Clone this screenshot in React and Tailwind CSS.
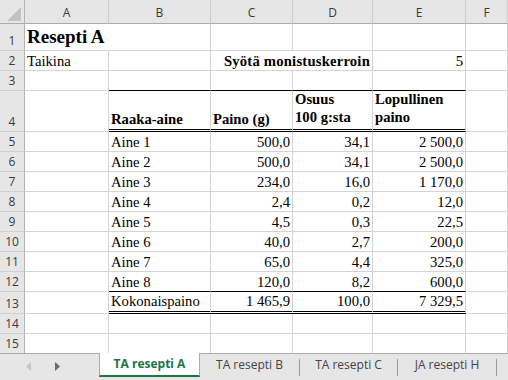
import React from "react";

const BOT = {
  grid: "border-b border-b-[#d4d4d4]",
  black: "border-b border-b-black",
  double: "border-b-[3px] border-b-black border-double",
  none: "",
};

const TXT = "font-['Liberation_Serif',serif] text-[14.67px] leading-[17px] text-black whitespace-nowrap";
const UI = "font-['Open_Sans',sans-serif]";

function Cell({ w, bottom = "grid", align = "left", cls = "", children }) {
  const al = align === "right" ? "justify-end pr-[2px]" : "justify-start pl-[2px]";
  return (
    <div className={`${w} shrink-0 flex items-end border-r border-r-[#d4d4d4] ${BOT[bottom]} ${al} ${TXT} ${cls}`}>
      {children}
    </div>
  );
}

function RowHead({ n, bottom = true }) {
  return (
    <div
      className={`w-[25px] shrink-0 flex items-end justify-center pb-[1px] bg-[#e6e6e6] border-r border-r-[#b4b4b4] ${
        bottom ? "border-b border-b-[#d0d0d0]" : ""
      } ${UI} text-[12px] leading-[16px] text-[#3a3a3a]`}
    >
      {n}
    </div>
  );
}

function ColHead({ w, children }) {
  return (
    <div
      className={`${w} shrink-0 flex items-end justify-center pb-[2px] bg-[#e6e6e6] border-r border-r-[#cdcdcd] border-b border-b-[#ababab] ${UI} text-[12px] leading-[16px] text-[#3a3a3a]`}
    >
      {children}
    </div>
  );
}

const data = [
  [5, "Aine 1", "500,0", "34,1", "2\u00a0500,0"],
  [6, "Aine 2", "500,0", "34,1", "2\u00a0500,0"],
  [7, "Aine 3", "234,0", "16,0", "1\u00a0170,0"],
  [8, "Aine 4", "2,4", "0,2", "12,0"],
  [9, "Aine 5", "4,5", "0,3", "22,5"],
  [10, "Aine 6", "40,0", "2,7", "200,0"],
  [11, "Aine 7", "65,0", "4,4", "325,0"],
  [12, "Aine 8", "120,0", "8,2", "600,0"],
];

export default function App() {
  return (
    <div className="w-[508px] h-[380px] overflow-hidden bg-white flex flex-col">
      {/* column headers */}
      <div className="flex h-[24px] shrink-0">
        <div className="w-[25px] shrink-0 flex items-end justify-end pr-[3px] pb-[2px] bg-[#e6e6e6] border-r border-r-[#b4b4b4] border-b border-b-[#ababab]">
          <svg width="14" height="14" viewBox="0 0 14 14">
            <polygon points="14,0 14,14 0,14" fill="#c2c2c2" />
          </svg>
        </div>
        <ColHead w="w-[84px]">A</ColHead>
        <ColHead w="w-[102px]">B</ColHead>
        <ColHead w="w-[82px]">C</ColHead>
        <ColHead w="w-[80px]">D</ColHead>
        <ColHead w="w-[93px]">E</ColHead>
        <ColHead w="flex-1">F</ColHead>
      </div>

      {/* row 1 */}
      <div className="flex h-[27px] shrink-0">
        <RowHead n="1" />
        <Cell w="w-[84px]" cls="!border-r-white pb-[2px]">
          <span className="font-bold text-[19px] leading-[22px]">Resepti A</span>
        </Cell>
        <Cell w="w-[102px]" />
        <Cell w="w-[82px]" />
        <Cell w="w-[80px]" />
        <Cell w="w-[93px]" />
        <Cell w="flex-1" />
      </div>

      {/* row 2 */}
      <div className="flex h-[20px] shrink-0">
        <RowHead n="2" />
        <Cell w="w-[84px]">Taikina</Cell>
        <Cell w="w-[102px]" />
        <Cell w="w-[162px]" align="right">
          <span className="font-bold tracking-[0.2px]">Syötä monistuskerroin</span>
        </Cell>
        <Cell w="w-[93px]" align="right">5</Cell>
        <Cell w="flex-1" />
      </div>

      {/* row 3 */}
      <div className="flex h-[20px] shrink-0">
        <RowHead n="3" />
        <Cell w="w-[84px]" />
        <Cell w="w-[102px]" bottom="black" />
        <Cell w="w-[82px]" bottom="black" />
        <Cell w="w-[80px]" bottom="black" />
        <Cell w="w-[93px]" bottom="black" />
        <Cell w="flex-1" />
      </div>

      {/* row 4 */}
      <div className="flex h-[41px] shrink-0">
        <RowHead n="4" />
        <Cell w="w-[84px]" />
        <Cell w="w-[102px]" bottom="double" cls="font-bold pb-[1px]">Raaka-aine</Cell>
        <Cell w="w-[82px]" bottom="double" cls="font-bold pb-[1px]">Paino (g)</Cell>
        <Cell w="w-[80px]" bottom="double" cls="font-bold pb-[3px] leading-[18px]">
          <span>
            Osuus
            <br />
            100 g:sta
          </span>
        </Cell>
        <Cell w="w-[93px]" bottom="double" cls="font-bold pb-[3px] leading-[18px]">
          <span>
            Lopullinen
            <br />
            paino
          </span>
        </Cell>
        <Cell w="flex-1" />
      </div>

      {data.map(([n, b, c, d, e]) => (
        <div key={n} className="flex h-[20px] shrink-0">
          <RowHead n={n} />
          <Cell w="w-[84px]" />
          <Cell w="w-[102px]" bottom={n === 12 ? "black" : "grid"}>{b}</Cell>
          <Cell w="w-[82px]" align="right" bottom={n === 12 ? "black" : "grid"}>{c}</Cell>
          <Cell w="w-[80px]" align="right" bottom={n === 12 ? "black" : "grid"}>{d}</Cell>
          <Cell w="w-[93px]" align="right" bottom={n === 12 ? "black" : "grid"}>{e}</Cell>
          <Cell w="flex-1" />
        </div>
      ))}

      {/* row 13 */}
      <div className="flex h-[22px] shrink-0">
        <RowHead n="13" />
        <Cell w="w-[84px]" />
        <Cell w="w-[102px]" bottom="double" cls="pb-[1px]">Kokonaispaino</Cell>
        <Cell w="w-[82px]" bottom="double" align="right" cls="pb-[1px]">1{"\u00a0"}465,9</Cell>
        <Cell w="w-[80px]" bottom="double" align="right" cls="pb-[1px]">100,0</Cell>
        <Cell w="w-[93px]" bottom="double" align="right" cls="pb-[1px]">7{"\u00a0"}329,5</Cell>
        <Cell w="flex-1" />
      </div>

      {/* row 14 */}
      <div className="flex h-[20px] shrink-0">
        <RowHead n="14" />
        <Cell w="w-[84px]" />
        <Cell w="w-[102px]" />
        <Cell w="w-[82px]" />
        <Cell w="w-[80px]" />
        <Cell w="w-[93px]" />
        <Cell w="flex-1" />
      </div>

      {/* row 15 */}
      <div className="flex h-[19px] shrink-0">
        <RowHead n="15" bottom={false} />
        <Cell w="w-[84px]" bottom="none" />
        <Cell w="w-[102px]" bottom="none" />
        <Cell w="w-[82px]" bottom="none" />
        <Cell w="w-[80px]" bottom="none" />
        <Cell w="w-[93px]" bottom="none" />
        <Cell w="flex-1" bottom="none" />
      </div>

      {/* sheet tabs */}
      <div className={`flex flex-1 bg-[#e6e6e6] ${UI} text-[12px] leading-[16px] text-[#444]`}>
        <div className="w-[99px] shrink-0 border-t border-t-[#ababab] flex items-start pt-[8px] pl-[26px] gap-[24px]">
          <svg width="5" height="9" viewBox="0 0 5 9">
            <polygon points="5,0 5,9 0,4.5" fill="#c6c6c6" />
          </svg>
          <svg width="5" height="9" viewBox="0 0 5 9">
            <polygon points="0,0 0,9 5,4.5" fill="#6a6a6a" />
          </svg>
        </div>
        <div className="w-[101px] h-[24px] shrink-0 bg-white border-x border-x-[#ababab] border-b-2 border-b-[#217346] flex items-center justify-center font-bold text-[#217346]">
          TA resepti A
        </div>
        <div className="flex-1 border-t border-t-[#ababab] flex items-start">
          <div className="w-[99px] h-[22px] shrink-0 flex items-center justify-center">TA resepti B</div>
          <div className="w-px h-[17px] mt-[5px] bg-[#9a9a9a] shrink-0" />
          <div className="w-[97px] h-[22px] shrink-0 flex items-center justify-center">TA resepti C</div>
          <div className="w-px h-[17px] mt-[5px] bg-[#9a9a9a] shrink-0" />
          <div className="w-[98px] h-[22px] shrink-0 flex items-center justify-center">JA resepti H</div>
          <div className="w-px h-[17px] mt-[5px] bg-[#9a9a9a] shrink-0" />
        </div>
      </div>
    </div>
  );
}
